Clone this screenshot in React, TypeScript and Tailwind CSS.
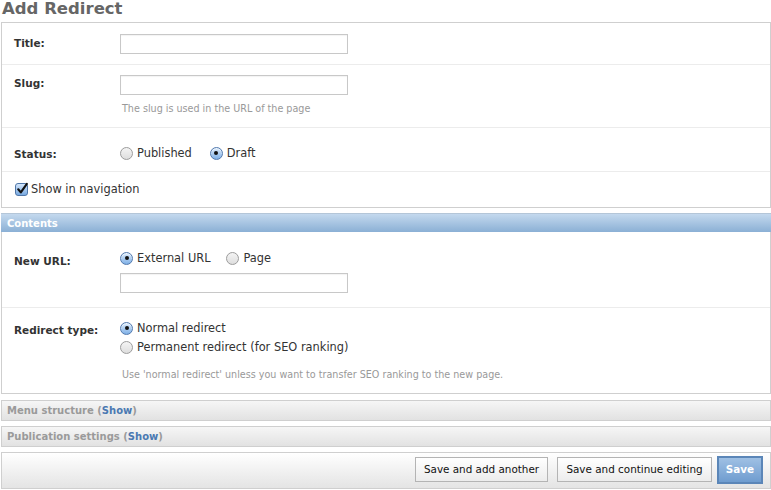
import React from "react";

const font = { fontFamily: '"DejaVu Sans", Verdana, sans-serif' };

function Radio({ checked }: { checked?: boolean }) {
  return checked ? (
    <span className="relative inline-block w-[13px] h-[13px] rounded-full border border-[#5279ae] bg-gradient-to-b from-[#dcebfb] to-[#7fb0e6] shadow-[inset_0_1px_1px_rgba(255,255,255,0.7)] shrink-0">
      <span className="absolute left-[3.5px] top-[3.5px] w-[4px] h-[4px] rounded-full bg-[#111]" />
    </span>
  ) : (
    <span className="inline-block w-[13px] h-[13px] rounded-full border border-[#9c9c9c] bg-gradient-to-b from-[#f4f4f4] to-[#dedede] shrink-0" />
  );
}

function RadioItem({ checked, label }: { checked?: boolean; label: string }) {
  return (
    <span className="inline-flex items-center gap-[4px] leading-[16px]">
      <Radio checked={checked} />
      <span>{label}</span>
    </span>
  );
}

function TextInput() {
  return <div className="w-[228px] h-[20px] border border-[#c8c8c8] bg-white shadow-[inset_0_1px_1px_rgba(0,0,0,0.05)]" />;
}

function Label({ children, className = "" }: { children: React.ReactNode; className?: string }) {
  return (
    <div className={`relative w-[118px] pl-[12px] shrink-0 font-bold text-[10.5px] text-[#333] ${className}`}>{children}</div>
  );
}

export default function App() {
  return (
    <div className="w-[771px] h-[490px] bg-white overflow-hidden text-[#333] text-[11.4px]" style={font}>
      <h1 className="h-[22px] pl-[2px] font-bold text-[16.5px] leading-[18px] text-[#666]">Add Redirect</h1>

      {/* Fieldset 1 */}
      <div className="ml-[1px] border border-[#cfcfcf]">
        <div className="flex pt-[11px] pb-[10px] border-b border-[#ececec]">
          <Label className="leading-[20px] -top-[1px]">Title:</Label>
          <TextInput />
        </div>
        <div className="flex pt-[10px] pb-[12px] border-b border-[#ececec]">
          <Label className="leading-[20px] -top-[2px]">Slug:</Label>
          <div>
            <TextInput />
            <div className="pl-[2px] mt-[7px] text-[9.6px] leading-[13px] text-[#999]">The slug is used in the URL of the page</div>
          </div>
        </div>
        <div className="flex items-center pt-[17px] pb-[10px] border-b border-[#ececec]">
          <Label className="leading-[16px] top-[1px]">Status:</Label>
          <div className="flex gap-[18px]">
            <RadioItem label="Published" />
            <RadioItem checked label="Draft" />
          </div>
        </div>
        <div className="flex items-center pt-[9px] pb-[10px] pl-[13px] gap-[3px] leading-[16px]">
          <span className="relative inline-block w-[13px] h-[13px] rounded-[3px] border border-[#4f76a8] bg-gradient-to-b from-[#d5e7fb] to-[#78a9e0]">
            <svg viewBox="0 0 13 13" className="absolute -left-[1px] -top-[2px] w-[14px] h-[14px]">
              <path d="M3 6.8 L5.4 9.6 L11 1.8" fill="none" stroke="#111" strokeWidth="2" strokeLinecap="round" strokeLinejoin="round" />
            </svg>
          </span>
          <span>Show in navigation</span>
        </div>
      </div>

      {/* Contents fieldset */}
      <div className="ml-[1px] mt-[5px] border border-[#cfcfcf]">
        <div className="h-[19px] -mt-[1px] -mx-[1px] pl-[6px] bg-gradient-to-b from-[#c4d9ee] to-[#8bb0d5] text-white font-bold text-[10px] leading-[20px] border-t border-[#b4c6d8]">
          Contents
        </div>
        <div className="flex pt-[18px] pb-[14px] border-b border-[#ececec]">
          <Label className="leading-[16px] top-[3px]">New URL:</Label>
          <div>
            <div className="flex gap-[16px]">
              <RadioItem checked label="External URL" />
              <RadioItem label="Page" />
            </div>
            <div className="mt-[7px]">
              <TextInput />
            </div>
          </div>
        </div>
        <div className="flex pt-[12px] pb-[12px]">
          <Label className="leading-[16px] top-[2px]">Redirect type:</Label>
          <div>
            <div className="flex flex-col gap-[3px]">
              <RadioItem checked label="Normal redirect" />
              <RadioItem label="Permanent redirect (for SEO ranking)" />
            </div>
            <div className="pl-[2px] mt-[13px] text-[9.6px] leading-[13px] text-[#999]">
              Use 'normal redirect' unless you want to transfer SEO ranking to the new page.
            </div>
          </div>
        </div>
      </div>

      {/* Collapsed */}
      <div className="ml-[1px] mt-[6px] h-[21px] border border-[#cfcfcf] bg-gradient-to-b from-[#f6f6f6] to-[#e2e2e2] pl-[5px] font-bold text-[10px] leading-[19px] text-[#9a9a9a]">
        Menu structure (<span className="text-[#4a79b2]">Show</span>)
      </div>
      <div className="ml-[1px] mt-[5px] h-[21px] border border-[#cfcfcf] bg-gradient-to-b from-[#f6f6f6] to-[#e2e2e2] pl-[5px] font-bold text-[10px] leading-[19px] text-[#9a9a9a]">
        Publication settings (<span className="text-[#4a79b2]">Show</span>)
      </div>

      {/* Submit row */}
      <div className="ml-[1px] mt-[5px] h-[37px] border border-[#cfcfcf] bg-gradient-to-b from-white to-[#e4e4e4] flex items-start pt-[3px] justify-end pr-[7px]">
        <div className="mt-[1px] h-[25px] w-[133px] border border-[#b4b4b4] bg-gradient-to-b from-white to-[#ececec] text-[10.4px] text-[#111] flex items-center justify-center">
          Save and add another
        </div>
        <div className="mt-[1px] ml-[9px] h-[25px] w-[155px] border border-[#b4b4b4] bg-gradient-to-b from-white to-[#ececec] text-[10.4px] text-[#111] flex items-center justify-center">
          Save and continue editing
        </div>
        <div className="ml-[5px] h-[28px] w-[46px] border-2 border-[#5b86b8] bg-gradient-to-b from-[#9fc0e4] to-[#6f9ccf] text-white font-bold text-[10.4px] flex items-center justify-center">
          Save
        </div>
      </div>
    </div>
  );
}
